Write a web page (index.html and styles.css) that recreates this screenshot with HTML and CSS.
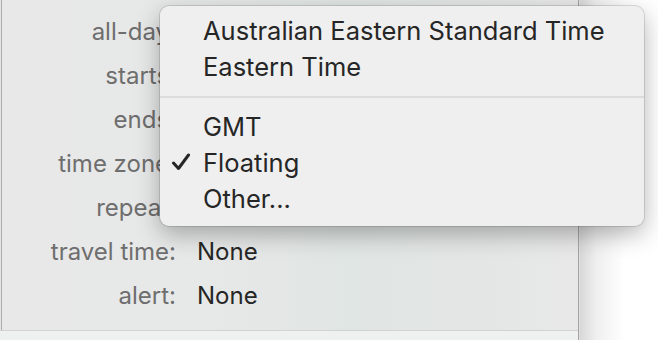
FILE: index.html
```html
<!DOCTYPE html>
<html lang="en">
<head>
  <meta charset="UTF-8">
  <title>Event details</title>
  <link rel="stylesheet" href="styles.css">
</head>
<body>

  <div class="panel">
    <div class="form">
      <div class="row"><span class="label">all-day:</span><span class="value"></span></div>
      <div class="row"><span class="label">starts:</span><span class="value"></span></div>
      <div class="row"><span class="label">ends:</span><span class="value"></span></div>
      <div class="row"><span class="label">time zone:</span><span class="value"></span></div>
      <div class="row"><span class="label">repeat:</span><span class="value"></span></div>
      <div class="row"><span class="label">travel time:</span><span class="value">None</span></div>
      <div class="row"><span class="label">alert:</span><span class="value">None</span></div>
    </div>
    <div class="footer"></div>

    <ul class="menu">
      <li class="item">Australian Eastern Standard Time</li>
      <li class="item">Eastern Time</li>
      <li class="sep"></li>
      <li class="item">GMT</li>
      <li class="item checked">
        <svg class="check" width="20" height="18" viewBox="0 0 20 18">
          <path d="M2.5 10 L7.5 15.5 L17.5 2" fill="none" stroke="#262626" stroke-width="3" stroke-linecap="round" stroke-linejoin="round"/>
        </svg>
        Floating
      </li>
      <li class="item">Other...</li>
    </ul>
  </div>

</body>
</html>
```

FILE: styles.css
```css
html, body {
  margin: 0;
  height: 100%;
  overflow: hidden;
}

body {
  font-family: Inter, 'Liberation Sans', Arial, sans-serif;
  font-size: 24px;
  background: linear-gradient(90deg, #e8e8e8 579px, #d8d8d8 580px, #efefef 596px, #fff 625px);
}

.panel {
  position: relative;
  width: 578px;
  height: 340px;
  display: flex;
  flex-direction: column;
  border-right: 1px solid #a4a4a4;
  box-shadow: inset 1px 0 0 #e4e4e4, inset 2px 0 0 #acacac;
  background: linear-gradient(90deg, #e8e8e8 0%, #e7e8e8 35%, #e0e6e4 60%, #e3e6e5 80%, #e8e8e8 100%);
}

.form {
  height: 320px;
  padding-top: 10px;
  border-bottom: 1px solid #d2d2d2;
}

.row {
  display: flex;
  height: 44px;
  line-height: 44px;
}

.label {
  width: 176px;
  text-align: right;
  color: #6e6e6e;
}

.value {
  margin-left: 21px;
  color: #262626;
}

.footer {
  flex: 1;
  background: #eff0f0;
}

.menu {
  position: absolute;
  left: 160px;
  top: 6px;
  width: 484px;
  margin: 0;
  padding: 7px 0 9px;
  list-style: none;
  font-size: 25.5px;
  background: #efefef;
  border-radius: 9px;
  box-shadow: 0 0 0 1px rgba(0, 0, 0, 0.12), 0 8px 24px rgba(0, 0, 0, 0.3);
}

.item {
  position: relative;
  height: 36px;
  line-height: 36px;
  padding-left: 43px;
  color: #262626;
}

.sep {
  height: 2px;
  margin: 11px 0;
  background: #dcdcdc;
}

.check {
  position: absolute;
  left: 11px;
  top: 8px;
}
```
